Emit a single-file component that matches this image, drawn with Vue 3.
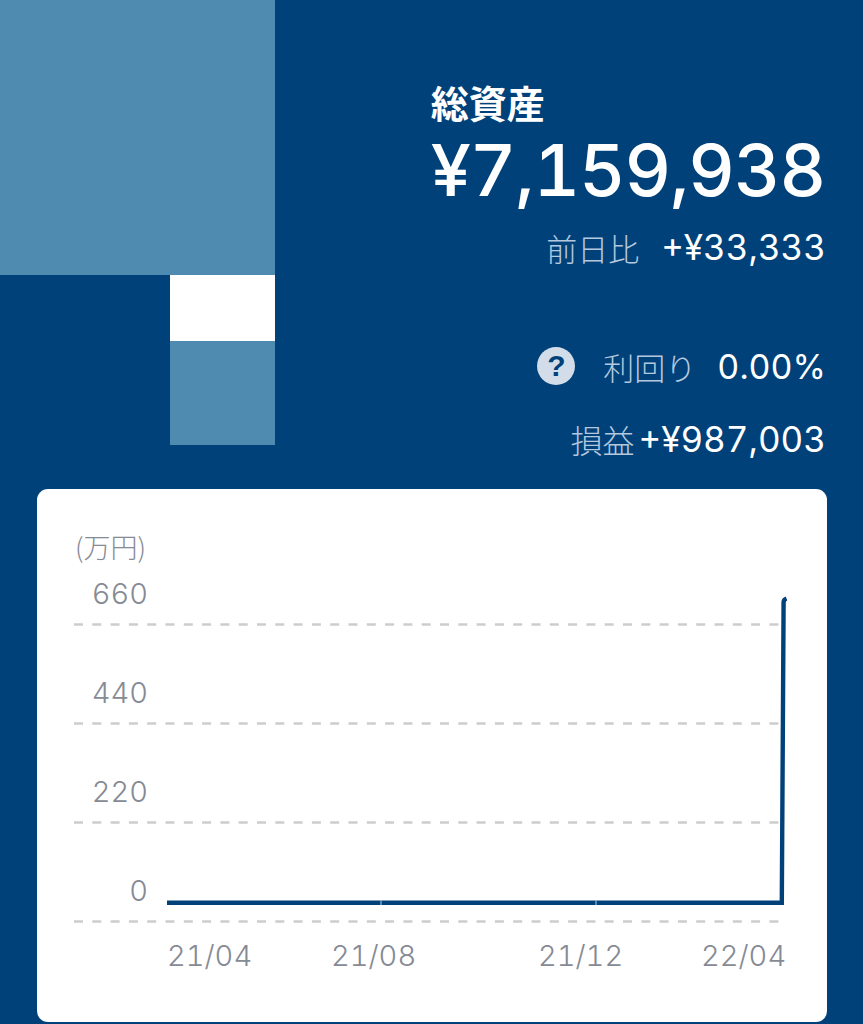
<template>
  <div class="page">
    <section class="top">
      <div class="treemap">
        <div class="tile big"></div>
        <div class="tile white"></div>
        <div class="tile small"></div>
      </div>
      <div class="summary">
        <div class="total">
          <div class="total-label">総資産</div>
          <div class="total-value">¥7,159,938</div>
        </div>
        <div class="row day">
          <span class="label">前日比</span>
          <span class="value">+¥33,333</span>
        </div>
        <div class="row yield">
          <span class="help">?</span>
          <span class="label">利回り</span>
          <span class="value">0.00%</span>
        </div>
        <div class="row profit">
          <span class="label">損益</span>
          <span class="value">+¥987,003</span>
        </div>
      </div>
    </section>

    <section class="card">
      <svg class="chart" viewBox="37 489 790 533" width="790" height="533">
        <text class="unit" x="75" y="558">(万円)</text>
        <g v-for="t in yTicks" :key="t.label">
          <text class="tick" x="148" :y="t.y - 20" text-anchor="end">{{ t.label }}</text>
          <line class="grid" x1="74" x2="782" :y1="t.y + 0.5" :y2="t.y + 0.5" />
        </g>
        <path class="series" d="M167 902.8H781.8L783.6 602Q783.8 599.5 786.5 598.5" />
        <line v-for="x in [381, 596]" :key="x" class="sep" :x1="x" :x2="x" y1="900.5" y2="905" />
        <text v-for="t in xTicks" :key="t.label" class="tick" :x="t.x" y="965.5">{{ t.label }}</text>
      </svg>
    </section>
  </div>
</template>

<script setup>
const yTicks = [
  { label: '660', y: 624 },
  { label: '440', y: 723 },
  { label: '220', y: 822 },
  { label: '0', y: 921 }
]

const xTicks = [
  { label: '21/04', x: 167 },
  { label: '21/08', x: 331 },
  { label: '21/12', x: 538 },
  { label: '22/04', x: 701 }
]
</script>

<style>
html,
body {
  margin: 0;
  background: #00417a;
}
</style>

<style scoped>
.page {
  width: 863px;
  height: 1024px;
  overflow: hidden;
  background: #00417a;
  font-family: "Noto Sans CJK JP", "Noto Sans", sans-serif;
}

.top {
  display: flex;
  height: 489px;
}

/* 資産配分のツリーマップ */
.treemap {
  width: 275px;
  display: flex;
  flex-direction: column;
  align-items: flex-end;
}
.tile.big {
  width: 275px;
  height: 275px;
  background: #4f8ab0;
}
.tile.white {
  width: 105px;
  height: 66px;
  background: #fff;
}
.tile.small {
  width: 105px;
  height: 104px;
  background: #4f8ab0;
}

.summary {
  flex: 1;
  display: flex;
  flex-direction: column;
  align-items: flex-end;
  padding: 77px 38px 0 0;
}

.total {
  color: #fff;
}
.total-label {
  font-size: 38px;
  line-height: 50px;
  font-weight: 700;
}
.total-value {
  font-family: "Inter", sans-serif;
  font-size: 72px;
  line-height: 86px;
  font-weight: 500;
  font-variant-numeric: tabular-nums;
  letter-spacing: -1.1px;
}

.row {
  display: flex;
  align-items: center;
  height: 46px;
}
.day {
  margin-top: 11px;
}
.yield {
  margin-top: 73px;
}
.profit {
  margin-top: 27px;
}

.label {
  font-size: 31px;
  font-weight: 300;
  color: #b4c8de;
}
.value {
  font-family: "Inter", sans-serif;
  font-size: 35px;
  font-weight: 400;
  font-variant-numeric: tabular-nums;
  color: #fff;
  margin-right: -1px;
}
.day .value {
  margin-left: 22px;
}
.yield .value {
  font-size: 34px;
  margin-left: 21px;
}
.profit .label {
  font-size: 32px;
}
.profit .value {
  margin-left: 4px;
}

.help {
  width: 38px;
  height: 38px;
  margin-right: 28px;
  border-radius: 50%;
  background: #d3dde9;
  color: #00417a;
  font-family: "Liberation Sans", sans-serif;
  font-size: 30px;
  font-weight: 700;
  line-height: 38px;
  text-align: center;
}

.card {
  width: 790px;
  height: 533px;
  margin-left: 37px;
  border-radius: 11px;
  background: #fff;
}
.chart {
  display: block;
}
.unit {
  font-size: 27px;
  font-weight: 300;
  fill: #868a94;
}
.tick {
  font-family: "Inter", sans-serif;
  font-size: 29px;
  font-weight: 300;
  font-variant-numeric: tabular-nums;
  fill: #868a94;
}
.grid {
  stroke: #cdcdcd;
  stroke-width: 2.4;
  stroke-dasharray: 9 9.3;
}
.series {
  fill: none;
  stroke: #00417a;
  stroke-width: 4.4;
  stroke-linejoin: miter;
  stroke-linecap: butt;
}
.sep {
  stroke: #b9cde0;
  stroke-width: 1;
}
</style>
